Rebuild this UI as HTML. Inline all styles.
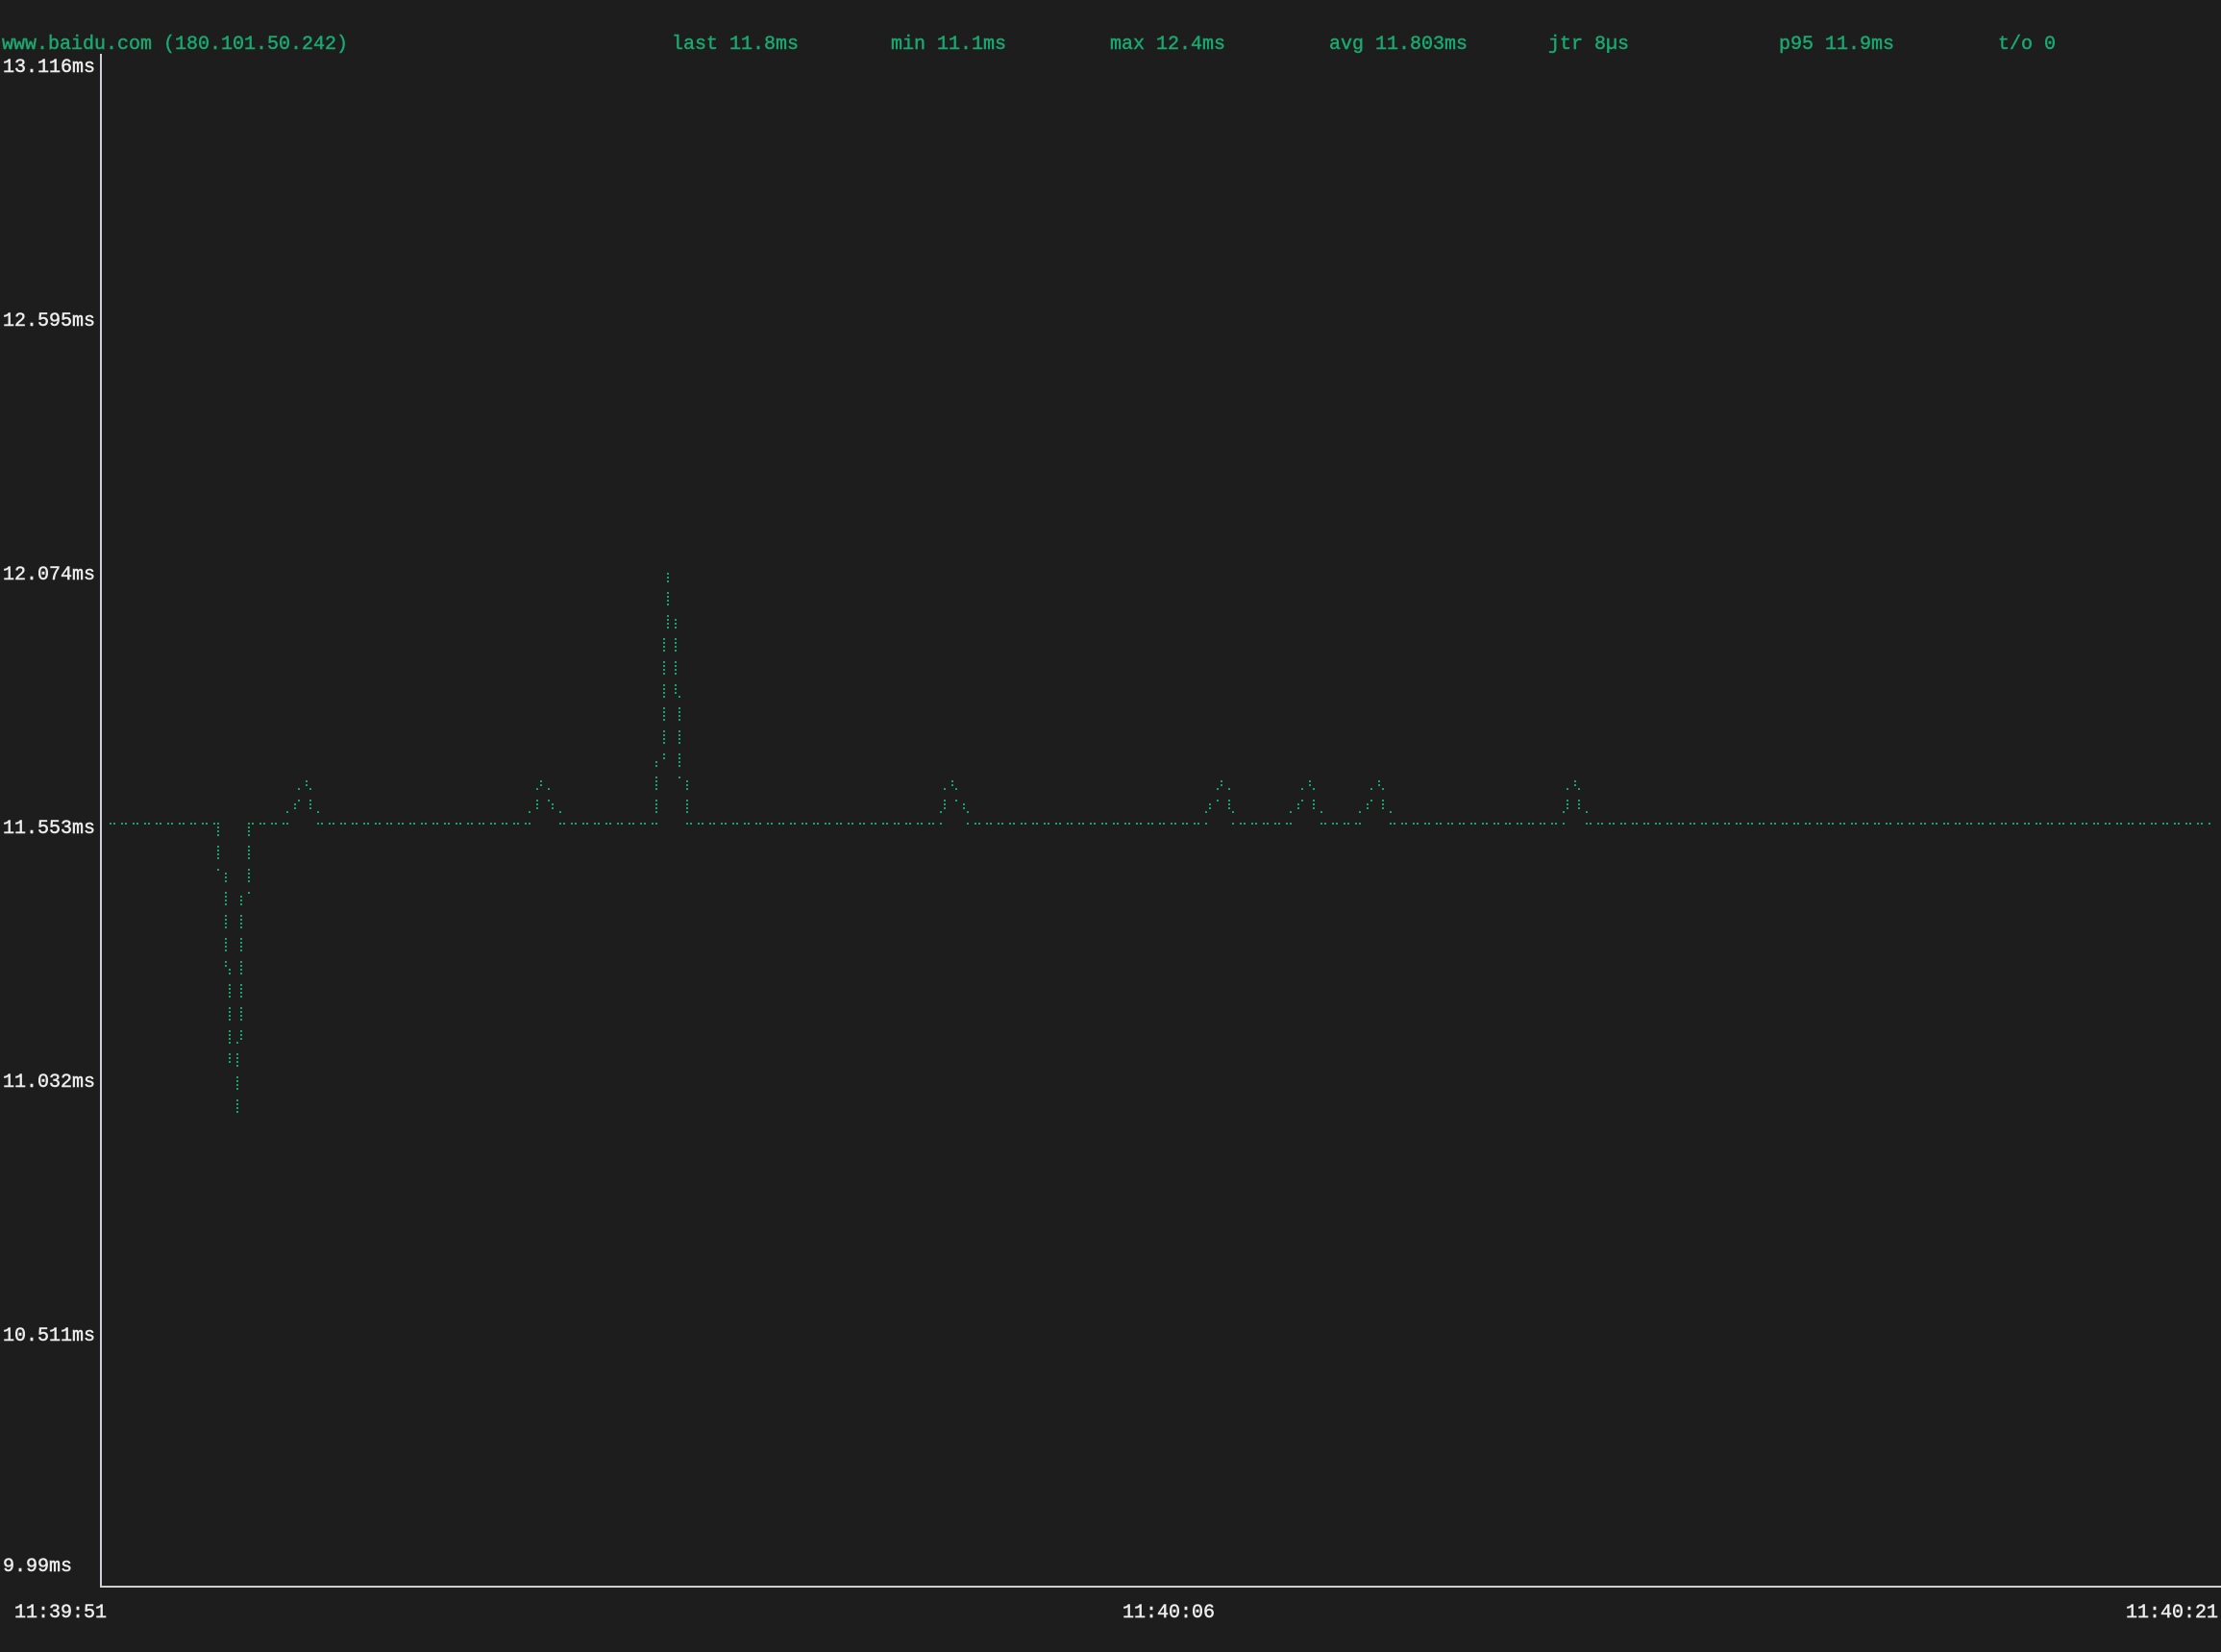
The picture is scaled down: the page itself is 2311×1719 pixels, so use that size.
<!DOCTYPE html>
<html><head><meta charset="utf-8">
<style>
html,body{margin:0;padding:0;background:#1d1d1d;width:2311px;height:1719px;overflow:hidden}
svg{display:block}
text{font-family:"Liberation Mono",monospace;font-size:20px;stroke-width:0.45px}
.g{fill:#19a870;stroke:#19a870}
.w{fill:#ececec;stroke:#ececec}
</style></head><body>
<svg width="2311" height="1719" viewBox="0 0 2311 1719" xmlns="http://www.w3.org/2000/svg">
<defs>
<pattern id="v" patternUnits="userSpaceOnUse" x="0" y="0" width="4" height="4"><rect x="2" y="0" width="2" height="2" fill="#17a56c"/></pattern>
<pattern id="ln" patternUnits="userSpaceOnUse" x="0" y="0" width="12" height="4"><rect x="6" y="0" width="2" height="2" fill="#17a56c"/><rect x="10" y="0" width="2" height="2" fill="#17a56c"/></pattern>
</defs>
<rect width="2311" height="1719" fill="#1d1d1d"/>

<text class="g" x="2" y="51">www.baidu.com (180.101.50.242)</text>
<text class="g" x="699" y="51">last 11.8ms</text>
<text class="g" x="927" y="51">min 11.1ms</text>
<text class="g" x="1155" y="51">max 12.4ms</text>
<text class="g" x="1383" y="51">avg 11.803ms</text>
<text class="g" x="1611" y="51">jtr 8µs</text>
<text class="g" x="1851" y="51">p95 11.9ms</text>
<text class="g" x="2079" y="51">t/o 0</text>

<text class="w" x="3" y="75">13.116ms</text>
<text class="w" x="3" y="339">12.595ms</text>
<text class="w" x="3" y="603">12.074ms</text>
<text class="w" x="3" y="867">11.553ms</text>
<text class="w" x="3" y="1131">11.032ms</text>
<text class="w" x="3" y="1395">10.511ms</text>
<text class="w" x="3" y="1635">9.99ms</text>

<text class="w" x="15" y="1683">11:39:51</text>
<text class="w" x="1168" y="1683">11:40:06</text>
<text class="w" x="2212" y="1683">11:40:21</text>

<rect x="104" y="56" width="2" height="1596" fill="#cfd0da"/>
<rect x="104" y="1650" width="2207" height="2" fill="#cfcfd2"/>

<rect x="114" y="856" width="2186" height="2" fill="url(#ln)"/>
<g fill="#1d1d1d">
<rect x="230" y="855" width="26" height="4"/>
<rect x="302" y="855" width="26" height="4"/>
<rect x="554" y="855" width="26" height="4"/>
<rect x="686" y="855" width="26" height="4"/>
<rect x="982" y="855" width="22" height="4"/>
<rect x="1258" y="855" width="22" height="4"/>
<rect x="1346" y="855" width="26" height="4"/>
<rect x="1418" y="855" width="26" height="4"/>
<rect x="1630" y="855" width="18" height="4"/>
</g>

<g fill="url(#v)">
<rect x="226" y="860" width="2" height="10"/><rect x="226" y="880" width="2" height="14"/><rect x="226" y="904" width="2" height="2"/>
<rect x="234" y="908" width="2" height="10"/><rect x="234" y="928" width="2" height="14"/><rect x="234" y="952" width="2" height="14"/><rect x="234" y="976" width="2" height="14"/><rect x="234" y="1000" width="2" height="6"/>
<rect x="238" y="1008" width="2" height="6"/><rect x="238" y="1024" width="2" height="14"/><rect x="238" y="1048" width="2" height="14"/><rect x="238" y="1072" width="2" height="14"/><rect x="238" y="1096" width="2" height="10"/>
<rect x="246" y="1084" width="2" height="2"/><rect x="246" y="1096" width="2" height="14"/><rect x="246" y="1120" width="2" height="14"/><rect x="246" y="1144" width="2" height="14"/>
<rect x="250" y="932" width="2" height="10"/><rect x="250" y="952" width="2" height="14"/><rect x="250" y="976" width="2" height="14"/><rect x="250" y="1000" width="2" height="14"/><rect x="250" y="1024" width="2" height="14"/><rect x="250" y="1048" width="2" height="14"/><rect x="250" y="1072" width="2" height="10"/>
<rect x="258" y="860" width="2" height="10"/><rect x="258" y="880" width="2" height="14"/><rect x="258" y="904" width="2" height="14"/><rect x="258" y="928" width="2" height="2"/>

<rect x="682" y="792" width="2" height="6"/><rect x="682" y="808" width="2" height="14"/><rect x="682" y="832" width="2" height="14"/>
<rect x="690" y="664" width="2" height="14"/><rect x="690" y="688" width="2" height="14"/><rect x="690" y="712" width="2" height="14"/><rect x="690" y="736" width="2" height="14"/><rect x="690" y="760" width="2" height="14"/><rect x="690" y="784" width="2" height="6"/>
<rect x="694" y="596" width="2" height="10"/><rect x="694" y="616" width="2" height="14"/><rect x="694" y="640" width="2" height="14"/>
<rect x="702" y="644" width="2" height="10"/><rect x="702" y="664" width="2" height="14"/><rect x="702" y="688" width="2" height="14"/><rect x="702" y="712" width="2" height="10"/>
<rect x="706" y="724" width="2" height="2"/><rect x="706" y="736" width="2" height="14"/><rect x="706" y="760" width="2" height="14"/><rect x="706" y="784" width="2" height="14"/><rect x="706" y="808" width="2" height="2"/>
<rect x="714" y="812" width="2" height="10"/><rect x="714" y="832" width="2" height="14"/>

<rect x="298" y="844" width="2" height="2"/><rect x="306" y="836" width="2" height="6"/><rect x="310" y="820" width="2" height="2"/><rect x="310" y="832" width="2" height="2"/><rect x="318" y="812" width="2" height="6"/><rect x="322" y="820" width="2" height="2"/><rect x="322" y="832" width="2" height="10"/><rect x="330" y="844" width="2" height="2"/>
<rect x="550" y="844" width="2" height="2"/><rect x="558" y="820" width="2" height="2"/><rect x="558" y="832" width="2" height="10"/><rect x="562" y="812" width="2" height="6"/><rect x="570" y="820" width="2" height="2"/><rect x="570" y="832" width="2" height="2"/><rect x="574" y="836" width="2" height="6"/><rect x="582" y="844" width="2" height="2"/>
<rect x="978" y="844" width="2" height="2"/><rect x="982" y="820" width="2" height="2"/><rect x="982" y="832" width="2" height="10"/><rect x="990" y="812" width="2" height="6"/><rect x="994" y="820" width="2" height="2"/><rect x="994" y="832" width="2" height="2"/><rect x="1002" y="836" width="2" height="6"/><rect x="1006" y="844" width="2" height="2"/>
<rect x="1254" y="844" width="2" height="2"/><rect x="1258" y="836" width="2" height="6"/><rect x="1266" y="820" width="2" height="2"/><rect x="1266" y="832" width="2" height="2"/><rect x="1270" y="812" width="2" height="6"/><rect x="1278" y="820" width="2" height="2"/><rect x="1278" y="832" width="2" height="10"/><rect x="1282" y="844" width="2" height="2"/>
<rect x="1342" y="844" width="2" height="2"/><rect x="1350" y="836" width="2" height="6"/><rect x="1354" y="820" width="2" height="2"/><rect x="1354" y="832" width="2" height="2"/><rect x="1362" y="812" width="2" height="6"/><rect x="1366" y="820" width="2" height="2"/><rect x="1366" y="832" width="2" height="10"/><rect x="1374" y="844" width="2" height="2"/>
<rect x="1414" y="844" width="2" height="2"/><rect x="1422" y="836" width="2" height="6"/><rect x="1426" y="820" width="2" height="2"/><rect x="1426" y="832" width="2" height="2"/><rect x="1434" y="812" width="2" height="6"/><rect x="1438" y="820" width="2" height="2"/><rect x="1438" y="832" width="2" height="10"/><rect x="1446" y="844" width="2" height="2"/>
<rect x="1626" y="844" width="2" height="2"/><rect x="1630" y="820" width="2" height="2"/><rect x="1630" y="832" width="2" height="10"/><rect x="1638" y="812" width="2" height="6"/><rect x="1642" y="820" width="2" height="2"/><rect x="1642" y="832" width="2" height="10"/><rect x="1650" y="844" width="2" height="2"/>
</g>
</svg>
</body></html>
